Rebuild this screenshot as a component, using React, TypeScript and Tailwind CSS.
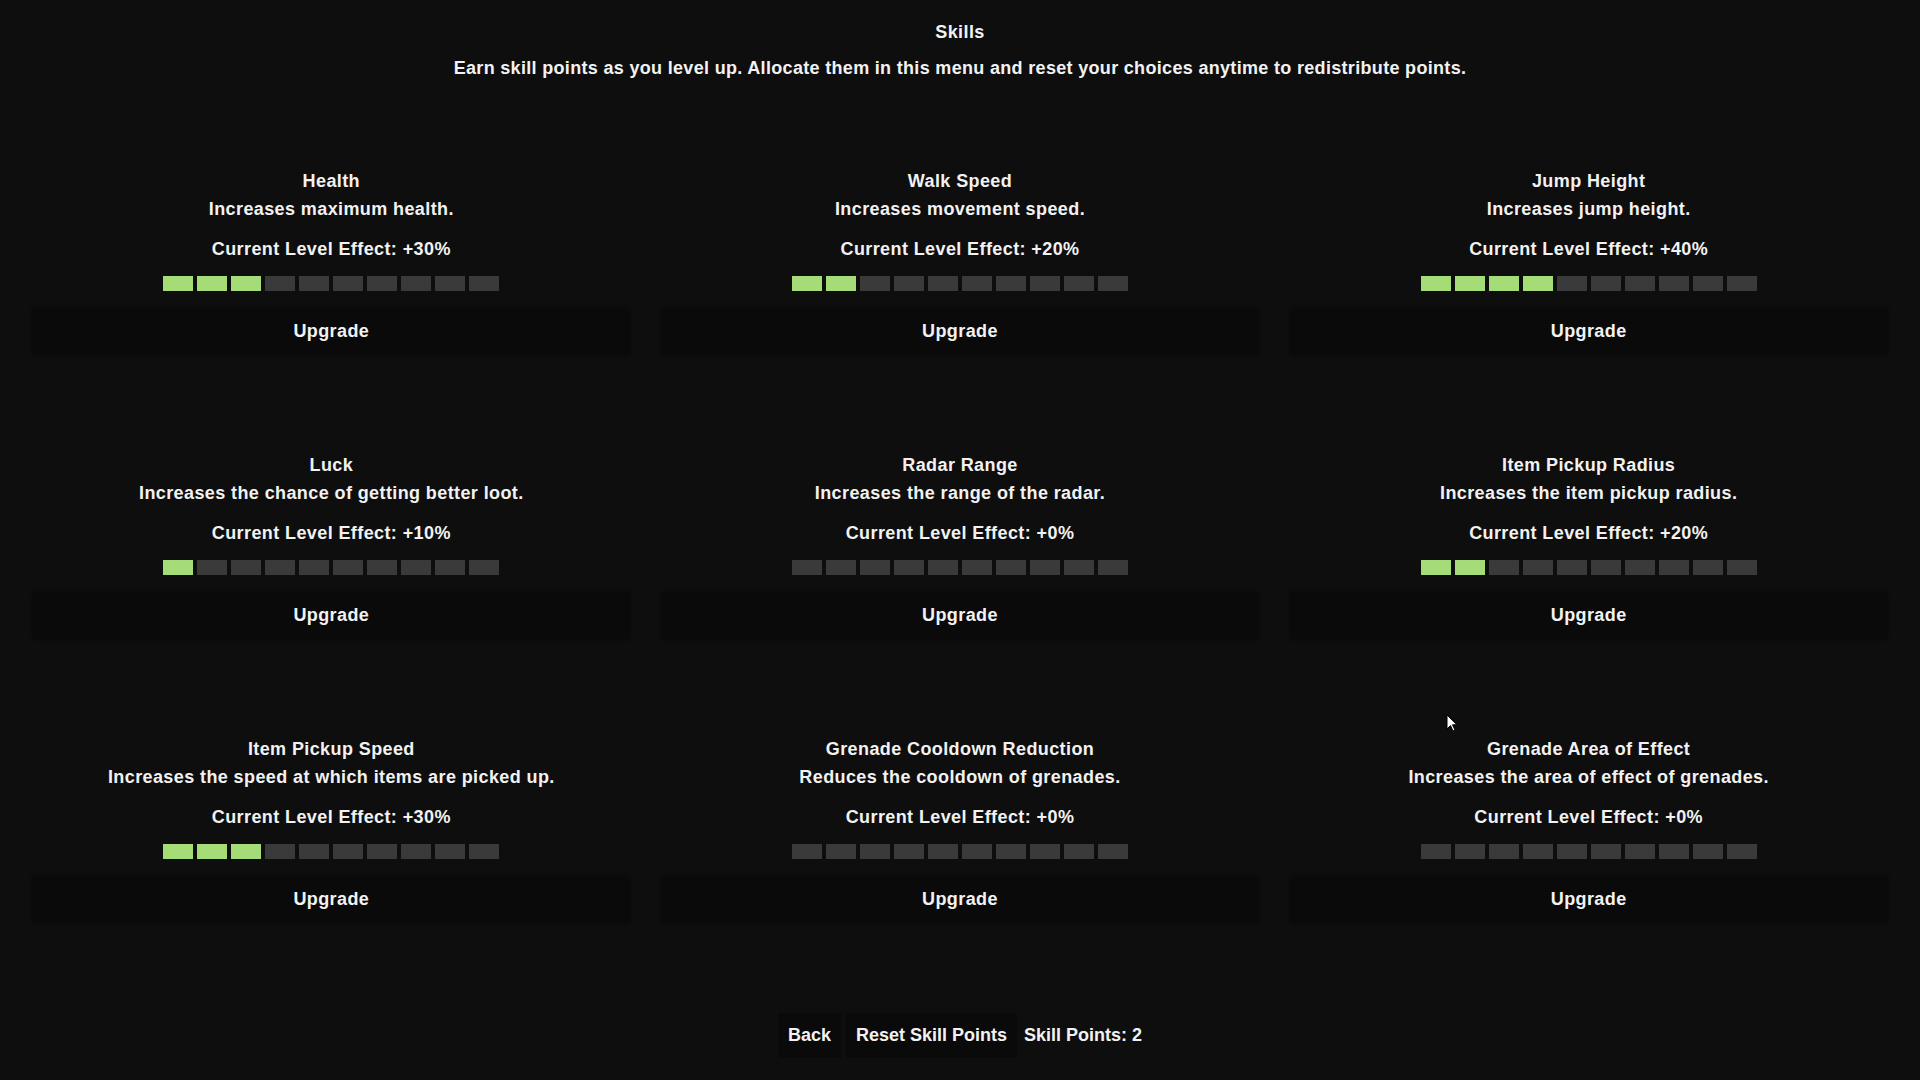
import React from "react"

type Skill = {
  name: string
  desc: string
  level: number
}

const skills: Skill[] = [
  { name: "Health", desc: "Increases maximum health.", level: 3 },
  { name: "Walk Speed", desc: "Increases movement speed.", level: 2 },
  { name: "Jump Height", desc: "Increases jump height.", level: 4 },
  { name: "Luck", desc: "Increases the chance of getting better loot.", level: 1 },
  { name: "Radar Range", desc: "Increases the range of the radar.", level: 0 },
  { name: "Item Pickup Radius", desc: "Increases the item pickup radius.", level: 2 },
  { name: "Item Pickup Speed", desc: "Increases the speed at which items are picked up.", level: 3 },
  { name: "Grenade Cooldown Reduction", desc: "Reduces the cooldown of grenades.", level: 0 },
  { name: "Grenade Area of Effect", desc: "Increases the area of effect of grenades.", level: 0 },
]

function LevelBar({ level }: { level: number }) {
  return (
    <div className="flex gap-[4px] mt-[13px]">
      {Array.from({ length: 10 }).map((_, i) => (
        <div
          key={i}
          className={
            i < level
              ? "w-[30px] h-[15px] bg-[#a5dc78]"
              : "w-[30px] h-[15px] bg-[#3a3a3a]"
          }
        />
      ))}
    </div>
  )
}

function SkillCard({ skill }: { skill: Skill }) {
  return (
    <div className="flex flex-col items-center">
      <div className="leading-[28px]">{skill.name}</div>
      <div className="leading-[28px]">{skill.desc}</div>
      <div className="leading-[28px] mt-[12px]">
        Current Level Effect: +{skill.level * 10}%
      </div>
      <LevelBar level={skill.level} />
      <button className="mt-[17px] w-full h-[47px] bg-[#0a0a0a] shadow-[0_0_3px_#0a0a0a] text-[#f2f2f2] tracking-[0.4px]">
        Upgrade
      </button>
    </div>
  )
}

export default function App() {
  return (
    <div
      className="relative w-[1920px] h-[1080px] bg-[#0e0e0e] text-[#f2f2f2] text-[18px] font-bold tracking-[0.4px] flex flex-col items-center overflow-hidden"
      style={{ fontFamily: '"Liberation Sans", Arial, sans-serif' }}
    >
      <div className="mt-[18px] leading-[28px]">Skills</div>
      <div className="mt-[8px] leading-[28px] tracking-[0.32px]">
        Earn skill points as you level up. Allocate them in this menu and reset your choices anytime to redistribute points.
      </div>

      <div className="mt-[85px] w-full px-[33px] grid grid-cols-3 gap-x-[32px] gap-y-[96px]">
        {skills.map((s) => (
          <SkillCard key={s.name} skill={s} />
        ))}
      </div>

      <div className="mt-[90px] flex items-center tracking-normal">
        <button className="h-[45px] px-[10px] bg-[#0a0a0a]">Back</button>
        <button className="ml-[5px] h-[45px] px-[10px] bg-[#0a0a0a]">Reset Skill Points</button>
        <span className="ml-[7px]">Skill Points: 2</span>
      </div>

      {/* mouse cursor */}
      <svg
        className="absolute left-[1446px] top-[714px]"
        width="13"
        height="19"
        viewBox="0 0 13 19"
      >
        <path
          d="M1 1 L1 15 L4.5 11.5 L7 17 L9 16 L6.5 10.8 L11 10.8 Z"
          fill="#ffffff"
          stroke="#000000"
          strokeWidth="1"
        />
      </svg>
    </div>
  )
}
